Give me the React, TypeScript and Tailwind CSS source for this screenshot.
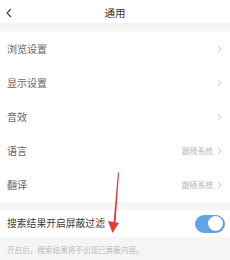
import React, { useState } from 'react';

const font = { fontFamily: '"Noto Sans CJK SC", "Noto Sans", sans-serif' };

function Chevron({ className = '' }: { className?: string }) {
  return (
    <svg width="5" height="8" viewBox="0 0 5 8" className={className}>
      <path d="M1 1l3 3-3 3" fill="none" stroke="currentColor" strokeWidth="0.9" />
    </svg>
  );
}

function Row({ label, value }: { label: string; value?: string }) {
  return (
    <div className="flex h-[34px] items-center justify-between pl-[7px] pr-[8px]">
      <span className="text-[10px] leading-none text-[#666]">{label}</span>
      <span className="flex items-center gap-[4px] text-[#c4c4c4]">
        {value && <span className="text-[7.8px] leading-none text-[#b5b5b5]">{value}</span>}
        <Chevron />
      </span>
    </div>
  );
}

export default function App() {
  const [on, setOn] = useState(true);

  return (
    <div className="relative h-[260px] w-[230px] overflow-hidden bg-white" style={font}>
      {/* header */}
      <div className="relative flex h-[23px] items-center justify-center">
        <svg width="6" height="10" viewBox="0 0 6 10" className="absolute left-[6px] top-[8px] text-[#444]">
          <path d="M5 1L1 5l4 4" fill="none" stroke="currentColor" strokeWidth="1.2" />
        </svg>
        <span className="mt-[3px] text-[10.5px] leading-none text-[#333]">通用</span>
      </div>
      <div className="h-[9px] bg-gradient-to-b from-[#f3f3f3] to-[#f8f8f8]" />

      <Row label="浏览设置" />
      <Row label="显示设置" />
      <Row label="音效" />
      <Row label="语言" value="跟随系统" />
      <Row label="翻译" value="跟随系统" />

      <div className="h-[8px] bg-[#f5f5f5]" />

      <div className="flex h-[27px] items-center justify-between pl-[7px] pr-[5px]">
        <span className="text-[9.8px] leading-none text-[#3a3a3a]">搜索结果开启屏蔽过滤</span>
        <button
          onClick={() => setOn(!on)}
          className={`flex h-[18px] w-[30px] items-center rounded-full p-[2px] ${on ? 'justify-end bg-[#62a4ea]' : 'justify-start bg-[#ddd]'}`}
        >
          <span className="h-[15px] w-[15px] rounded-full bg-white shadow-[0_0_1px_rgba(0,0,0,0.3)]" />
        </button>
      </div>

      <div className="flex h-[23px] items-center bg-[#f5f5f5] pl-[7px] pt-[2px]">
        <span className="text-[7.6px] leading-none text-[#bbb]">开启后，搜索结果将不出现已屏蔽内容。</span>
      </div>

      {/* red annotation arrow */}
      <svg width="230" height="260" className="pointer-events-none absolute left-0 top-0">
        <path d="M118 172 L119 173 L115.5 223 L113.5 223 Z" fill="#e53935" />
        <path d="M108 221 L119 223 L112.5 233 Z" fill="#e53935" />
      </svg>
    </div>
  );
}
